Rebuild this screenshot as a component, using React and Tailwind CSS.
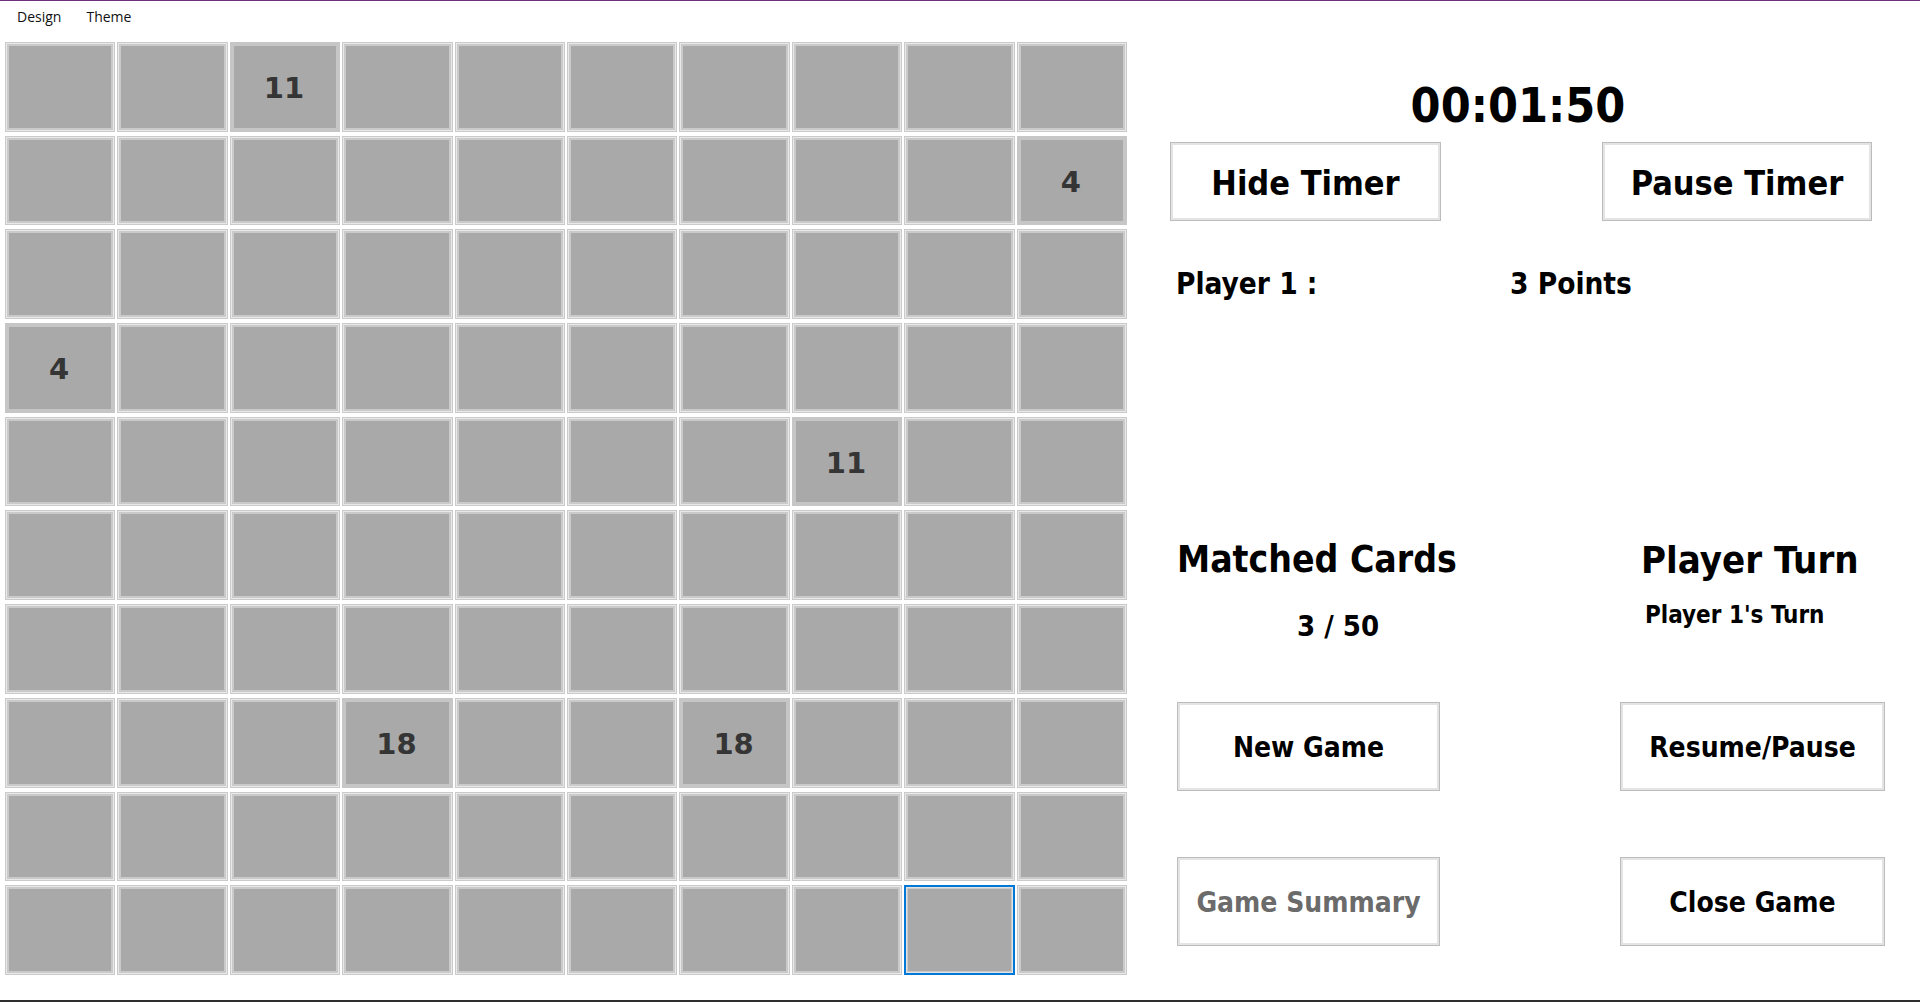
import React from "react";

const revealed = {
  "0-2": "11",
  "1-9": "4",
  "3-0": "4",
  "4-7": "11",
  "7-3": "18",
  "7-6": "18",
};
const selected = "9-8";

const cells = [];
for (let r = 0; r < 10; r++) {
  for (let c = 0; c < 10; c++) {
    cells.push({ key: `${r}-${c}`, value: revealed[`${r}-${c}`] });
  }
}

const Cell = ({ id, value }) => {
  if (value) {
    return (
      <div className="flex items-center justify-center pt-[4px] pr-[2px] bg-[#a9a9a9] border-4 border-[#c6c6c6] font-['DejaVu_Sans',sans-serif] font-bold text-[29px] text-[#353535]">
        {value}
      </div>
    );
  }
  if (id === selected) {
    return <div className="bg-[#a9a9a9] border-2 border-[#0078d7] shadow-[inset_0_0_0_1px_#e2e2e2,inset_0_0_0_2px_#cacaca]" />;
  }
  return <div className="bg-[#a9a9a9] border border-[#cacaca] shadow-[inset_0_0_0_1px_#e9e9e9,inset_0_0_0_3px_#cacaca]" />;
};

const WinButton = ({ children, className, text = "text-[28px]", muted }) => (
  <button
    className={`bg-white border border-[#bcbcbc] shadow-[inset_0_0_0_2px_#e4e4e4] flex items-center justify-center pt-[3px] font-bold ${text} ${muted ? "text-[#6b6b6b]" : "text-black"} ${className}`}
  >
    {children}
  </button>
);

export default function App() {
  return (
    <div className="w-[1920px] h-[1002px] bg-white border-t border-[#6f2f7c] border-b-2 border-b-[#2e2e2e] flex flex-col overflow-hidden">
      {/* menu */}
      <div className="h-[41px] flex items-start pt-[5px] pl-[17px] gap-[25px] font-['Open_Sans',sans-serif] text-[14px] text-[#111]">
        <span>Design</span>
        <span>Theme</span>
      </div>

      <div className="flex">
        {/* board */}
        <div className="ml-[5px] w-[1122px] h-[933px] grid grid-cols-10 grid-rows-10 gap-x-[2px] gap-y-[4px]">
          {cells.map((c) => (
            <Cell key={c.key} id={c.key} value={c.value} />
          ))}
        </div>

        {/* side panel */}
        <div className="flex-1 flex flex-col font-['DejaVu_Sans_Condensed','DejaVu_Sans',sans-serif] font-bold text-black">
          <div className="mt-[39px] ml-[43px] w-[696px] h-[48px] leading-[48px] text-center text-[48px]">00:01:50</div>

          <div className="mt-[13px] flex">
            <WinButton className="ml-[43px] w-[271px] h-[79px]" text="text-[34px]">Hide Timer</WinButton>
            <WinButton className="ml-[161px] w-[270px] h-[79px]" text="text-[34px]">Pause Timer</WinButton>
          </div>

          <div className="mt-[47px] flex h-[32px] leading-[32px] text-[29.5px]">
            <span className="ml-[49px] w-[334px]">Player 1 :</span>
            <span>3 Points</span>
          </div>

          <div className="mt-[240px] flex">
            <div className="ml-[50px] w-[464px] flex flex-col">
              <div className="h-[40px] leading-[40px] text-[37px]">Matched Cards</div>
              <div className="mt-[31px] ml-[120px] h-[30px] leading-[30px] text-[29px]">3 / 50</div>
            </div>
            <div className="flex flex-col">
              <div className="h-[40px] leading-[40px] text-[38px]">Player Turn</div>
              <div className="mt-[21px] ml-[4px] h-[28px] leading-[28px] text-[24px]">Player 1's Turn</div>
            </div>
          </div>

          <div className="mt-[61px] flex">
            <WinButton className="ml-[50px] w-[263px] h-[89px]">New Game</WinButton>
            <WinButton className="ml-[180px] w-[265px] h-[89px]">Resume/Pause</WinButton>
          </div>

          <div className="mt-[66px] flex">
            <WinButton className="ml-[50px] w-[263px] h-[89px]" muted>Game Summary</WinButton>
            <WinButton className="ml-[180px] w-[265px] h-[89px]">Close Game</WinButton>
          </div>
        </div>
      </div>
    </div>
  );
}
